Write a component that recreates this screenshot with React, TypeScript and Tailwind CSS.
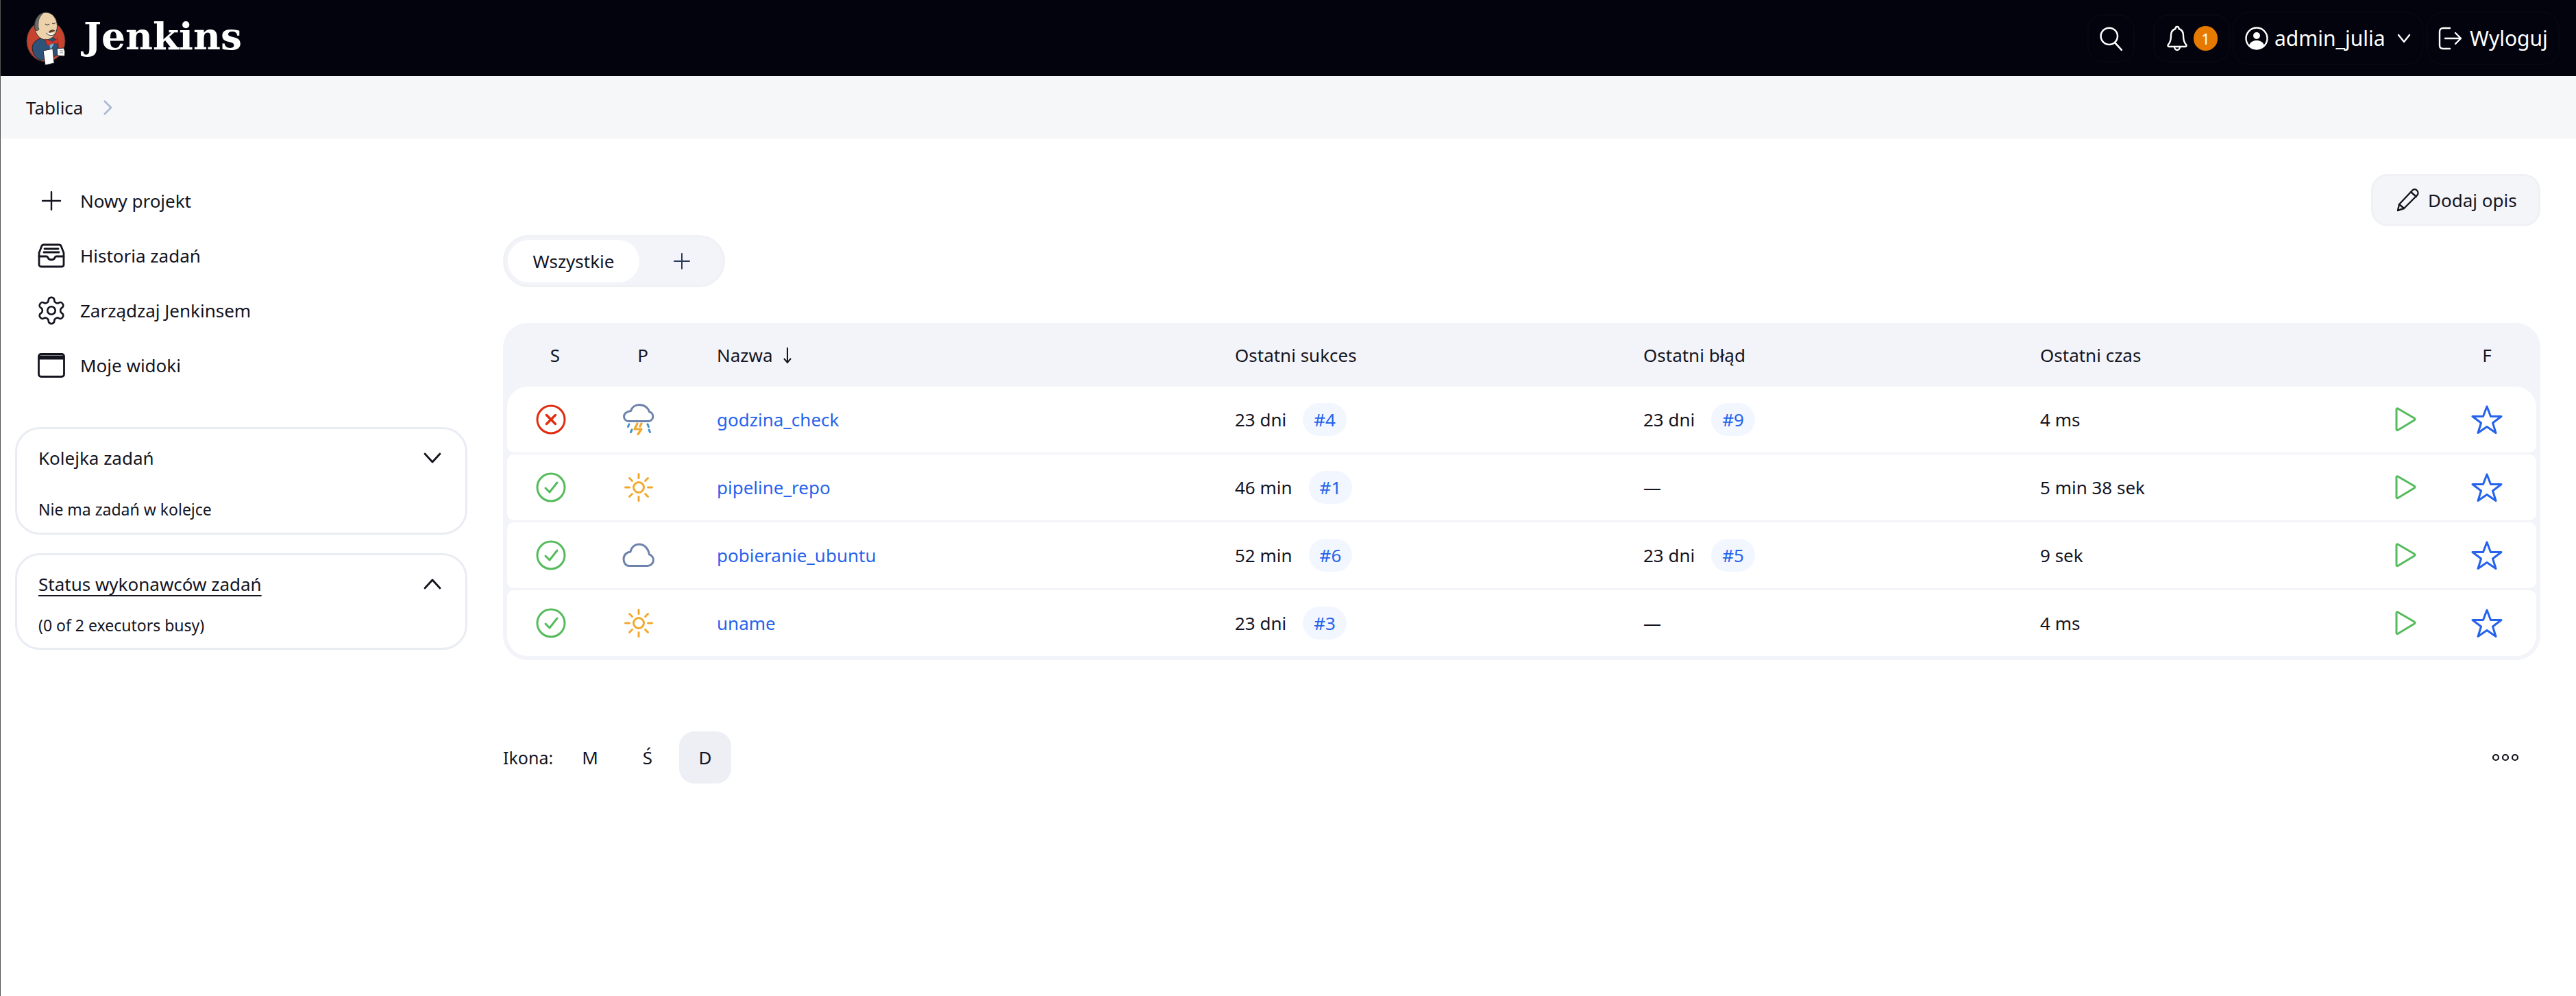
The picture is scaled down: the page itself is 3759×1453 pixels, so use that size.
import React from "react";

const C = ({ children, w = 34, h = 34, vb = "0 0 24 24", sw = 2, color = "currentColor", className = "" }: any) => (
  <svg width={w} height={h} viewBox={vb} fill="none" stroke={color} strokeWidth={sw} strokeLinecap="round" strokeLinejoin="round" className={className}>
    {children}
  </svg>
);

const Logo = () => (
  <svg width="80" height="90" viewBox="0 0 80 90" className="-mx-[10px] -my-[5px] shrink-0">
    <ellipse cx="37" cy="49" rx="28" ry="30" fill="#c8432f" stroke="#3a3a3a" strokeWidth="1" />
    <path d="M17 58 Q18 49 29 45 L47 44 Q55 48 55 58 L57 66 L47 73 L30 77 Q17 72 17 58Z" fill="#2f5279" stroke="#20262e" strokeWidth="1" />
    <path d="M41 50 L50 50 L44 62 Z" fill="#7fb0d0" />
    <ellipse cx="37" cy="27" rx="16.5" ry="20" fill="#ecd1ab" stroke="#30302e" strokeWidth="1" />
    <path d="M22 33 Q18 20 26 13 Q30 9 33 8 Q26 15 26 22 Q25 28 27 32 Q24 35 22 33Z" fill="#6c6c6c" stroke="#333" strokeWidth="0.7" />
    <path d="M36 24 Q39 27 42 24 M46 23 Q49 25 51 22" stroke="#222" strokeWidth="1" fill="none" />
    <path d="M41 35 Q46 30 51 34 Q46 36 42 37Z" fill="#5a4030" />
    <path d="M37 37 Q44 44 51 38" stroke="#333" strokeWidth="1" fill="#fff" />
    <path d="M36 46 L47 50 L54 45 L55 53 L47 52 L39 56 Z" fill="#d6352a" stroke="#7c2018" strokeWidth="0.6" />
    <path d="M33 63 L47 60 L49 81 L36 84 Z" fill="#ffffff" stroke="#2a2a2a" strokeWidth="1" />
    <path d="M53 60 L63 59 Q66 65 64 71 L54 70 Z" fill="#fff" stroke="#2a2a2a" strokeWidth="1" />
    <path d="M57 63 h5 M57 66 h5" stroke="#555" strokeWidth="0.8" />
  </svg>
);

const Sun = () => (
  <C w={42} h={42} vb="0 0 42 42" sw={3} color="#f0a92e">
    <circle cx="21" cy="21" r="7.5" />
    <path d="M21 1.500v6M21 34.500v6M1.500 21h6M34.500 21h6M7.500 7.500l4 4M30.500 30.500l4 4M7.500 34.500l4-4M30.500 11.500l4-4" />
  </C>
);
const Cloud = () => (
  <C w={48} h={36} vb="0 0 48 36" sw={3} color="#6d83ac">
    <path d="M10 33.500h27a8.500 8.500 0 0 0 2.500-16.600C38 8 32 2 25 2c-6.500 0-11.500 4-13 11C6 13.500 2 18 2 23.500c0 6 3.500 10 8 10Z" />
  </C>
);
const Storm = () => (
  <svg width="46" height="46" viewBox="0 0 46 46" fill="none" strokeLinecap="round" strokeLinejoin="round">
    <path d="M9 25.500h28a7 7 0 0 0 1.500-13.800C37 6 31 1.500 24 1.500 18 1.500 13 5 11.500 10.500 6 11 1.500 14.500 1.500 18.500 1.500 23 5 25.500 9 25.500Z" stroke="#6d83ac" strokeWidth="3" />
    <path d="M21 29l-4 8h10l-5 7.500M27 29l-2 4" stroke="#f0a92e" strokeWidth="3.200" />
    <path d="M9 30l-1.500 3.500M13 38l-1.500 3.500M36 30l1.500 3.500M38 38l1.500 3.500" stroke="#3d93c9" strokeWidth="3" />
  </svg>
);
const Status = ({ ok }: { ok: boolean }) => (
  <svg width="44" height="44" viewBox="0 0 44 44" fill="none" stroke={ok ? "#56bb5c" : "#e22c0f"} strokeWidth="3" strokeLinecap="round" strokeLinejoin="round">
    <circle cx="22" cy="22" r="20" />
    {ok ? <path d="M14 23l6 6 11-14" strokeWidth="3" /> : <path d="M15.500 15.500l13 13M28.500 15.500l-13 13" strokeWidth="3.500" />}
  </svg>
);
const Play = () => (
  <svg width="32" height="36" viewBox="0 0 32 36" fill="none" stroke="#56bb5c" strokeWidth="3" strokeLinejoin="round">
    <path d="M3 3.500c0-1.500 1-2 2-1.500l24 14c1.300.8 1.300 2.200 0 3L5 33.500c-1 .5-2 0-2-1.500Z" />
  </svg>
);
const Star = () => (
  <svg width="46" height="44" viewBox="0 0 46 44" fill="none" stroke="#2563eb" strokeWidth="3" strokeLinejoin="round">
    <path d="M23 3l5.500 14.500H44L31.500 27 36 41.500 23 32.500 10 41.500 14.500 27 2 17.500h15.500Z" />
  </svg>
);

const Badge = ({ n }: { n: string }) => (
  <span className="h-[48px] px-[16px] rounded-[24px] bg-[#f2f6ff] text-[#2563eb] flex items-center">{n}</span>
);
const Cell = ({ t, n }: { t: string; n?: string }) => (
  <div className="flex items-center gap-[24px]">
    <span>{t}</span>
    {n && <Badge n={n} />}
  </div>
);

const cols = "grid grid-cols-[128px_128px_756px_596px_578px_526px_116px_122px] items-center";

const jobs = [
  { ok: false, w: <Storm />, name: "godzina_check", s: ["23 dni", "#4"], f: ["23 dni", "#9"], d: "4 ms" },
  { ok: true, w: <Sun />, name: "pipeline_repo", s: ["46 min", "#1"], f: ["—"], d: "5 min 38 sek" },
  { ok: true, w: <Cloud />, name: "pobieranie_ubuntu", s: ["52 min", "#6"], f: ["23 dni", "#5"], d: "9 sek" },
  { ok: true, w: <Sun />, name: "uname", s: ["23 dni", "#3"], f: ["—"], d: "4 ms" },
];

const side = [
  {
    l: "Nowy projekt",
    i: (
      <C w={34} h={34} vb="0 0 34 34" sw={2.400}>
        <path d="M17 4v26M4 17h26" />
      </C>
    ),
  },
  {
    l: "Historia zadań",
    i: (
      <C w={40} h={36} vb="0 0 40 36" sw={2.800}>
        <path d="M2 14 6 3.500C6.500 2.500 7.500 2 9 2h22c1.500 0 2.500.5 3 1.500L38 14v17c0 2-1.500 3-3 3H5c-1.500 0-3-1-3-3Z" />
        <path d="M2 19h11c1 0 1.500.5 2 2 1 2 3 3 5 3s4-1 5-3c.5-1.500 1-2 2-2h11M10 8h20M9 13h22" />
      </C>
    ),
  },
  {
    l: "Zarządzaj Jenkinsem",
    i: (
      <C w={46} h={46} vb="0 0 24 24" sw={1.400}>
        <path d="M12.220 2h-.44a2 2 0 0 0-2 2v.18a2 2 0 0 1-1 1.730l-.43.250a2 2 0 0 1-2 0l-.150-.08a2 2 0 0 0-2.730.730l-.220.380a2 2 0 0 0 .730 2.730l.150.100a2 2 0 0 1 1 1.720v.510a2 2 0 0 1-1 1.740l-.150.090a2 2 0 0 0-.730 2.730l.220.380a2 2 0 0 0 2.730.730l.150-.08a2 2 0 0 1 2 0l.430.250a2 2 0 0 1 1 1.730V20a2 2 0 0 0 2 2h.44a2 2 0 0 0 2-2v-.18a2 2 0 0 1 1-1.730l.430-.250a2 2 0 0 1 2 0l.150.080a2 2 0 0 0 2.730-.730l.220-.390a2 2 0 0 0-.730-2.730l-.150-.080a2 2 0 0 1-1-1.740v-.500a2 2 0 0 1 1-1.740l.150-.090a2 2 0 0 0 .730-2.730l-.220-.380a2 2 0 0 0-2.730-.730l-.150.080a2 2 0 0 1-2 0l-.430-.250a2 2 0 0 1-1-1.730V4a2 2 0 0 0-2-2z" />
        <circle cx="12" cy="12" r="3" />
      </C>
    ),
  },
  {
    l: "Moje widoki",
    i: (
      <svg width="40" height="36" viewBox="0 0 40 36" fill="none" stroke="currentColor" strokeWidth="2.800" strokeLinejoin="round">
        <rect x="1.500" y="1.500" width="37" height="33" rx="3.500" />
        <path d="M2 3.500h36v6H2Z" fill="currentColor" stroke="none" />
      </svg>
    ),
  },
];

export default function App() {
  return (
    <div className="min-h-[1453px] bg-white border-l border-[#555] font-['Noto_Sans','Open_Sans',sans-serif] text-[26px] text-[#14141f] leading-none">
      <header className="h-[111px] bg-[#02030c] text-white flex items-center pl-[39px] pr-[24px]">
        <Logo />
        <span className="ml-[22px] mb-[6px] font-['DejaVu_Serif',Georgia,serif] font-bold text-[55px] text-white">Jenkins</span>
        <div className="ml-auto flex items-center">
          <div className="w-[69px] h-[70px] rounded-[22px] border-[2px] border-[#07080f] flex items-center justify-center">
            <C w={36} h={36} vb="0 0 34 34" sw={2.400}>
              <circle cx="14" cy="14" r="11.500" />
              <path d="M22 23l9 10" />
            </C>
          </div>
          <div className="ml-[27px] w-[112px] h-[70px] rounded-[22px] border-[2px] border-[#07080f] flex items-center pl-[17px] gap-[8px]">
            <C w={32} h={38} vb="0 0 32 38" sw={2.400}>
              <path d="M16 2c-1.500 0-2.500 1-2.500 3C8.500 6.500 7 11 7 15c0 5-1 10-4 13-1 1.500-.5 3 1 3h24c1.500 0 2-1.500 1-3-3-3-4-8-4-13 0-4-1.500-8.500-6.500-10 0-2-1-3-2.500-3Z" />
              <path d="M12 31c0 3 2 5 4 5s4-2 4-5" />
            </C>
            <span className="w-[35px] h-[36px] rounded-full bg-[#e67a00] text-white text-[22px] flex items-center justify-center">1</span>
          </div>
          <div className="ml-[4px] w-[278px] h-[78px] rounded-[24px] border-[2px] border-[#07080f] flex items-center pl-[16px] text-[30px]">
            <svg width="34" height="34" viewBox="0 0 34 34" fill="none" stroke="white" strokeWidth="2.400">
              <circle cx="17" cy="17" r="15.500" />
              <circle cx="17" cy="13" r="5" fill="white" stroke="none" />
              <path d="M6 27c2-5 6-7 11-7s9 2 11 7c-3 3-7 5-11 5s-8-2-11-5Z" fill="white" stroke="none" />
            </svg>
            <span className="ml-[9px] w-[170px]">admin_julia</span>
            <C w={22} h={22} vb="0 0 22 22" sw={2.400} className="ml-[8px]">
              <path d="M3 6l8 10 8-10" />
            </C>
          </div>
          <div className="ml-[5px] w-[194px] h-[78px] rounded-[24px] border-[2px] border-[#07080f] flex items-center pl-[15px] text-[30px]">
            <C w={35} h={34} vb="0 0 35 34" sw={2.400}>
              <path d="M17 2H7C4 2 2 4 2 7v20c0 3 2 5 5 5h10" />
              <path d="M10 17h23M25 9l8 8-8 8" />
            </C>
            <span className="ml-[11px]">Wyloguj</span>
          </div>
        </div>
      </header>

      <nav className="h-[91px] bg-[#f6f7f9] flex items-center pl-[37px]">
        <span>Tablica</span>
        <svg width="14" height="24" viewBox="0 0 14 24" fill="none" stroke="#a9b8d4" strokeWidth="2.600" className="ml-[29px]">
          <path d="M2 2l10 10-10 10" />
        </svg>
      </nav>

      <div className="flex">
        <aside className="w-[733px] shrink-0 pt-[51px] pl-[21px] pr-[52px]">
          <ul className="flex flex-col">
            {side.map((s) => (
              <li key={s.l} className="h-[80px] flex items-center">
                <span className="w-[95px] pl-[20px] pr-[9px] flex justify-center shrink-0">{s.i}</span>
                <span>{s.l}</span>
              </li>
            ))}
          </ul>
          <section className="mt-[50px] h-[157px] rounded-[36px] border-[3px] border-[#e9ecf3] pl-[31px] pr-[33px] pt-[29px]">
            <div className="flex items-center justify-between">
              <span>Kolejka zadań</span>
              <C w={30} h={24} vb="0 0 30 24" sw={2.800}>
                <path d="M4 6l11 12L26 6" />
              </C>
            </div>
            <p className="mt-[51px] text-[23px]">Nie ma zadań w kolejce</p>
          </section>
          <section className="mt-[27px] h-[141px] rounded-[36px] border-[3px] border-[#e9ecf3] pl-[31px] pr-[33px] pt-[29px]">
            <div className="flex items-center justify-between">
              <span className="underline underline-offset-[6px]">Status wykonawców zadań</span>
              <C w={30} h={24} vb="0 0 30 24" sw={2.800}>
                <path d="M4 18L15 6l11 12" />
              </C>
            </div>
            <p className="mt-[36px] text-[23px]">(0 of 2 executors busy)</p>
          </section>
        </aside>

        <main className="flex-1 pr-[52px] pt-[52px]">
          <div className="flex justify-end">
            <button className="w-[247px] h-[76px] rounded-[24px] bg-[#f4f5f9] border-[3px] border-[#eff1f5] flex items-center pl-[33px] gap-[11px]">
              <C w={36} h={36} vb="0 0 36 36" sw={2.400}>
                <path d="M3 33l2-9L24 4c2-2.500 5-2.500 7 0 2 2 2 5 0 7L12 30Z" />
                <path d="M5 24l7 6M22 6l8 7" />
              </C>
              <span>Dodaj opis</span>
            </button>
          </div>

          <div className="mt-[13px] w-[324px] h-[76px] rounded-full bg-[#f3f4f9] border-[3px] border-[#eff1f5] flex items-center pl-[4px]">
            <span className="w-[192px] h-[62px] rounded-full bg-white flex items-center justify-center">Wszystkie</span>
            <C w={26} h={26} vb="0 0 26 26" sw={2} color="#2b3a5a" className="ml-[49px]">
              <path d="M13 2v22M2 13h22" />
            </C>
          </div>

          <div className="mt-[52px] rounded-[36px] bg-[#f3f4f9] p-[6px] pt-0">
            <div className={`${cols} h-[93px]`}>
              <span className="pl-[12px] text-center">S</span>
              <span className="pl-[12px] text-center">P</span>
              <span className="pl-[50px] flex items-center gap-[14px]">
                Nazwa
                <svg width="14" height="26" viewBox="0 0 14 26" fill="none" stroke="currentColor" strokeWidth="2">
                  <path d="M7 2v22M2 18l5 6 5-6" />
                </svg>
              </span>
              <span className="pl-[50px]">Ostatni sukces</span>
              <span className="pl-[50px]">Ostatni błąd</span>
              <span className="pl-[51px]">Ostatni czas</span>
              <span />
              <span className="text-center">F</span>
            </div>
            <div className="flex flex-col gap-[3px]">
              {jobs.map((j, i) => (
                <div key={j.name} className={`${cols} h-[96px] bg-white rounded-[10px] ${i === 0 ? "rounded-t-[30px]" : ""} ${i === jobs.length - 1 ? "rounded-b-[30px]" : ""}`}>
                  <span className="flex justify-center"><Status ok={j.ok} /></span>
                  <span className="flex justify-center">{j.w}</span>
                  <span className="pl-[50px] text-[#2563eb]">{j.name}</span>
                  <span className="pl-[50px]"><Cell t={j.s[0]} n={j.s[1]} /></span>
                  <span className="pl-[50px]"><Cell t={j.f[0]} n={j.f[1]} /></span>
                  <span className="pl-[51px]">{j.d}</span>
                  <span className="flex justify-center"><Play /></span>
                  <span className="flex justify-center"><Star /></span>
                </div>
              ))}
            </div>
          </div>

          <div className="mt-[104px] h-[76px] flex items-center">
            <span className="w-[72px] text-[25px]">Ikona:</span>
            <span className="ml-[17px] w-[76px] h-[76px] flex items-center justify-center">M</span>
            <span className="ml-[8px] w-[76px] h-[76px] flex items-center justify-center">Ś</span>
            <span className="ml-[8px] w-[76px] h-[76px] rounded-[22px] bg-[#edeff4] flex items-center justify-center">D</span>
            <svg width="40" height="12" viewBox="0 0 40 12" fill="none" stroke="#14141f" strokeWidth="2.200" className="ml-auto mr-[31px]">
              <circle cx="6" cy="6" r="4" />
              <circle cx="20" cy="6" r="4" />
              <circle cx="34" cy="6" r="4" />
            </svg>
          </div>
        </main>
      </div>
    </div>
  );
}
